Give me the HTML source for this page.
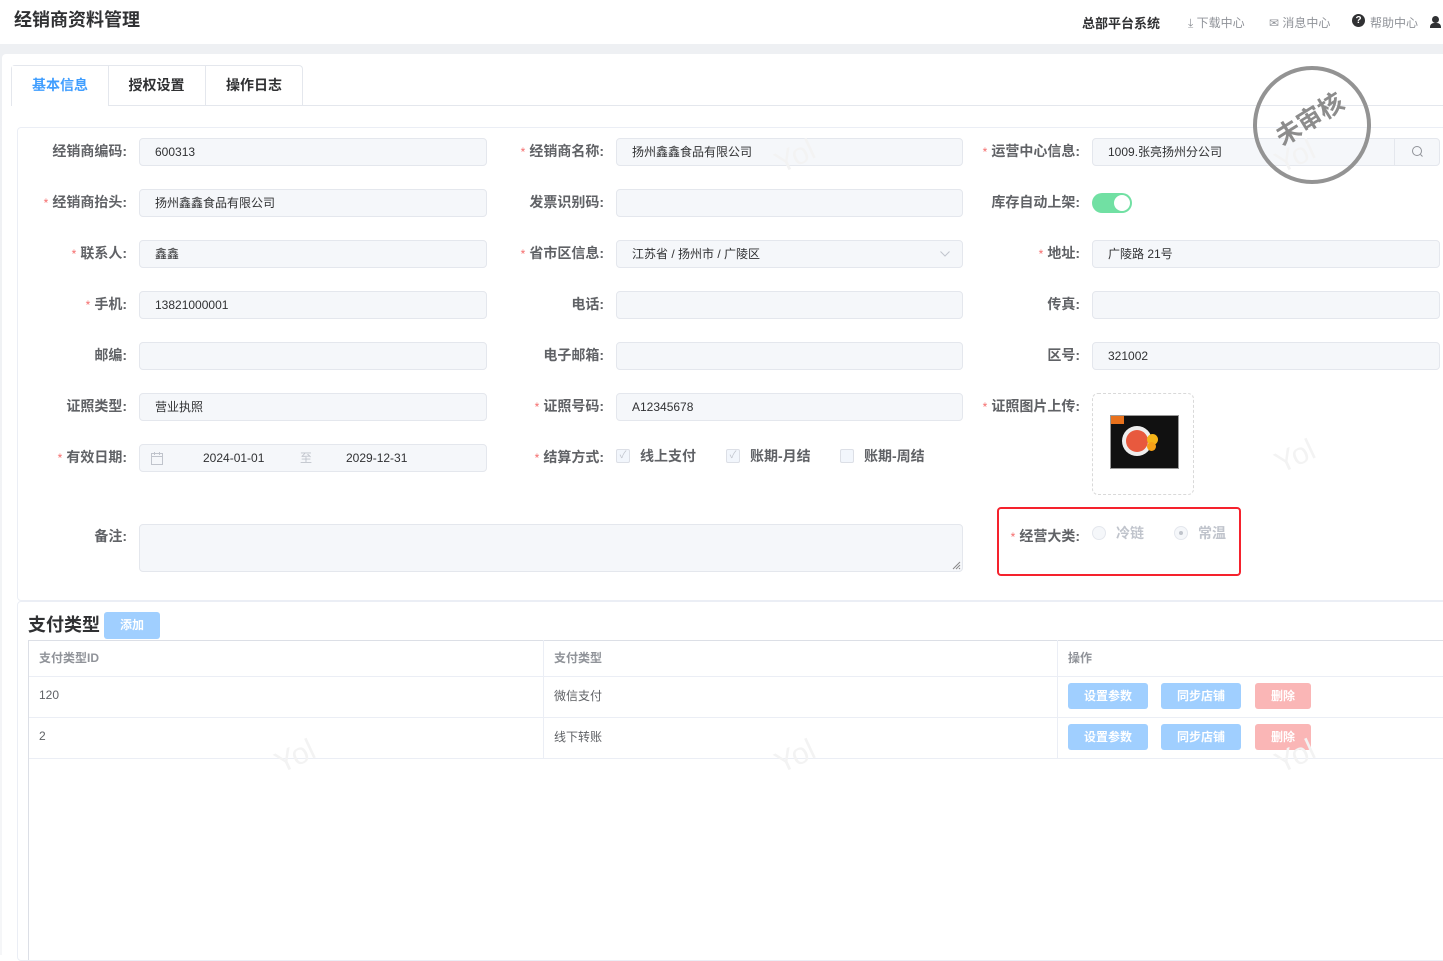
<!DOCTYPE html>
<html><head><meta charset="utf-8"><style>
*{box-sizing:border-box;margin:0;padding:0}
body{width:1443px;height:955px;overflow:hidden;background:#fff;font-family:"Liberation Sans","Noto Sans CJK SC",sans-serif;color:#606266;position:relative}
.a{position:absolute}
.lbl{position:absolute;font-size:14px;font-weight:bold;color:#606266;text-align:right;white-space:nowrap;line-height:16px}
.lbl i{color:#f56c6c;font-style:normal;font-weight:normal;margin-right:4px;font-size:12px}
.in{position:absolute;height:28px;background:#f5f7fa;border:1px solid #e4e7ed;border-radius:4px;font-size:12px;color:#303133;padding-left:15px;line-height:26px}
.wm{position:absolute;font-size:30px;color:#f3f3f3;transform:rotate(-25deg);font-family:"Liberation Sans",sans-serif}
.btn{position:absolute;height:26px;border-radius:3px;color:#fff;font-size:12px;font-weight:bold;text-align:center;line-height:26px}
.cb{position:absolute;top:449px;width:14px;height:14px;border:1px solid #dcdfe6;background:#f2f6fc;border-radius:2px;font-size:10px;color:#c0c4cc;text-align:center;line-height:12px}
.ct{position:absolute;top:448px;font-size:14px;font-weight:bold;color:#606266;line-height:16px}
</style></head><body>
<div class="wm" style="left:275px;top:140px">Yol</div>
<div class="a" style="left:14px;top:6px;font-size:18px;font-weight:bold;color:#303133">经销商资料管理</div>
<div class="a" style="left:1082px;top:13px;font-size:13px;font-weight:bold;color:#303133">总部平台系统</div>
<div class="a" style="left:1188px;top:14px;font-size:12px;color:#909399">⤓ 下载中心</div>
<div class="a" style="left:1269px;top:14px;font-size:12px;color:#909399">✉ 消息中心</div>
<div class="a" style="left:1352px;top:14px;width:13px;height:13px;border-radius:50%;background:#303133;color:#fff;font-size:10px;text-align:center;line-height:13px;font-weight:bold">?</div>
<div class="a" style="left:1370px;top:14px;font-size:12px;color:#909399">帮助中心</div>
<div class="a" style="left:1432px;top:16px;width:7px;height:7px;border-radius:50%;background:#303133"></div>
<div class="a" style="left:1430px;top:23px;width:11px;height:5px;border-radius:4px 4px 0 0;background:#303133"></div>
<div class="a" style="left:0;top:44px;width:1443px;height:911px;background:linear-gradient(#eef0f3,#f5f6f8)"></div>
<div class="a" style="left:2px;top:54px;width:1441px;height:901px;background:#fff;border-radius:4px 0 0 0"></div>
<!-- tabs -->
<div class="a" style="left:11px;top:105px;width:1432px;height:1px;background:#e4e7ed"></div>
<div class="a" style="left:11px;top:65px;width:292px;height:41px;border:1px solid #e4e7ed;border-bottom:none;border-radius:4px 4px 0 0"></div>
<div class="a" style="left:12px;top:66px;width:96px;height:40px;background:#fff;color:#409eff;font-size:14px;font-weight:bold;text-align:center;line-height:38px">基本信息</div>
<div class="a" style="left:108px;top:66px;width:1px;height:39px;background:#e4e7ed"></div>
<div class="a" style="left:108px;top:66px;width:97px;font-size:14px;font-weight:bold;color:#303133;text-align:center;line-height:38px">授权设置</div>
<div class="a" style="left:205px;top:66px;width:1px;height:39px;background:#e4e7ed"></div>
<div class="a" style="left:205px;top:66px;width:98px;font-size:14px;font-weight:bold;color:#303133;text-align:center;line-height:38px">操作日志</div>
<!-- form card -->
<div class="a" style="left:17px;top:127px;width:1440px;height:474px;border:1px solid #ebeef5;border-radius:4px"></div>

<div class="lbl" style="right:1316px;top:143px">经销商编码:</div><div class="in" style="left:139px;top:138px;width:348px">600313</div>
<div class="lbl" style="right:839px;top:143px"><i>*</i>经销商名称:</div><div class="in" style="left:616px;top:138px;width:347px">扬州鑫鑫食品有限公司</div>
<div class="lbl" style="right:363px;top:143px"><i>*</i>运营中心信息:</div><div class="in" style="left:1092px;top:138px;width:348px">1009.张亮扬州分公司</div>
<div class="a" style="left:1394px;top:139px;width:45px;height:26px;border-left:1px solid #e4e7ed"><svg width="45" height="26"><circle cx="22" cy="12" r="4.5" fill="none" stroke="#909399" stroke-width="1"/><line x1="25.5" y1="15.5" x2="27.5" y2="17.5" stroke="#909399"/></svg></div>

<div class="lbl" style="right:1316px;top:194px"><i>*</i>经销商抬头:</div><div class="in" style="left:139px;top:189px;width:348px">扬州鑫鑫食品有限公司</div>
<div class="lbl" style="right:839px;top:194px">发票识别码:</div><div class="in" style="left:616px;top:189px;width:347px"></div>
<div class="lbl" style="right:363px;top:194px">库存自动上架:</div>
<div class="a" style="left:1092px;top:193px;width:40px;height:20px;border-radius:10px;background:#71e0a3"></div>
<div class="a" style="left:1114px;top:195px;width:16px;height:16px;border-radius:50%;background:#fff"></div>

<div class="lbl" style="right:1316px;top:245px"><i>*</i>联系人:</div><div class="in" style="left:139px;top:240px;width:348px">鑫鑫</div>
<div class="lbl" style="right:839px;top:245px"><i>*</i>省市区信息:</div><div class="in" style="left:616px;top:240px;width:347px">江苏省 / 扬州市 / 广陵区<svg style="position:absolute;right:12px;top:10px" width="10" height="6"><path d="M0.5 0.5L5 5L9.5 0.5" fill="none" stroke="#c0c4cc"/></svg></div>
<div class="lbl" style="right:363px;top:245px"><i>*</i>地址:</div><div class="in" style="left:1092px;top:240px;width:348px">广陵路 21号</div>

<div class="lbl" style="right:1316px;top:296px"><i>*</i>手机:</div><div class="in" style="left:139px;top:291px;width:348px">13821000001</div>
<div class="lbl" style="right:839px;top:296px">电话:</div><div class="in" style="left:616px;top:291px;width:347px"></div>
<div class="lbl" style="right:363px;top:296px">传真:</div><div class="in" style="left:1092px;top:291px;width:348px"></div>

<div class="lbl" style="right:1316px;top:347px">邮编:</div><div class="in" style="left:139px;top:342px;width:348px"></div>
<div class="lbl" style="right:839px;top:347px">电子邮箱:</div><div class="in" style="left:616px;top:342px;width:347px"></div>
<div class="lbl" style="right:363px;top:347px">区号:</div><div class="in" style="left:1092px;top:342px;width:348px">321002</div>

<div class="lbl" style="right:1316px;top:398px">证照类型:</div><div class="in" style="left:139px;top:393px;width:348px">营业执照</div>
<div class="lbl" style="right:839px;top:398px"><i>*</i>证照号码:</div><div class="in" style="left:616px;top:393px;width:347px">A12345678</div>
<div class="lbl" style="right:363px;top:398px"><i>*</i>证照图片上传:</div>
<div class="a" style="left:1092px;top:393px;width:102px;height:102px;border:1px dashed #d9d9d9;border-radius:6px"></div>
<div class="a" style="left:1110px;top:415px;width:69px;height:54px;background:#111;border:1px solid #999">
 <div class="a" style="left:0;top:0;width:13px;height:8px;background:#e8711c"></div>
 <div class="a" style="left:11px;top:10px;width:30px;height:30px;border-radius:50%;background:#eee"></div>
 <div class="a" style="left:15px;top:14px;width:22px;height:22px;border-radius:50%;background:#e8593e"></div>
 <div class="a" style="left:36px;top:18px;width:11px;height:11px;border-radius:50%;background:#f6b418"></div>
 <div class="a" style="left:36px;top:26px;width:9px;height:9px;border-radius:50%;background:#f6a018"></div>
</div>

<div class="lbl" style="right:1316px;top:449px"><i>*</i>有效日期:</div>
<div class="in" style="left:139px;top:444px;width:348px;padding-left:12px;color:#c0c4cc"><svg style="position:absolute;left:11px;top:7px" width="12" height="13"><rect x="0.5" y="1.5" width="11" height="11" fill="none" stroke="#c0c4cc"/><line x1="0.5" y1="4.5" x2="11.5" y2="4.5" stroke="#c0c4cc"/><line x1="3.5" y1="0" x2="3.5" y2="3" stroke="#c0c4cc"/><line x1="8.5" y1="0" x2="8.5" y2="3" stroke="#c0c4cc"/></svg><span style="position:absolute;left:63px;color:#303133">2024-01-01</span><span style="position:absolute;left:160px">至</span><span style="position:absolute;left:206px;color:#303133">2029-12-31</span></div>
<div class="lbl" style="right:839px;top:449px"><i>*</i>结算方式:</div>
<div class="cb" style="left:616px">✓</div><div class="ct" style="left:640px">线上支付</div>
<div class="cb" style="left:726px">✓</div><div class="ct" style="left:750px">账期-月结</div>
<div class="cb" style="left:840px"></div><div class="ct" style="left:864px">账期-周结</div>

<div class="lbl" style="right:1316px;top:528px">备注:</div>
<div class="in" style="left:139px;top:524px;width:824px;height:48px"><svg style="position:absolute;right:1px;bottom:1px" width="10" height="10"><path d="M9 2L2 9M9 5L5 9M9 8L8 9" stroke="#888" stroke-width="1"/></svg></div>

<div class="a" style="left:997px;top:507px;width:244px;height:69px;border:2px solid #f5222d;border-radius:4px"></div>
<div class="lbl" style="right:363px;top:528px"><i>*</i>经营大类:</div>
<div class="a" style="left:1092px;top:526px;width:14px;height:14px;border-radius:50%;border:1px solid #e4e7ed;background:#f5f7fa"></div>
<div class="a" style="left:1116px;top:525px;font-size:14px;font-weight:bold;color:#c0c4cc;line-height:16px">冷链</div>
<div class="a" style="left:1174px;top:526px;width:14px;height:14px;border-radius:50%;border:1px solid #e4e7ed;background:#f5f7fa"></div>
<div class="a" style="left:1179px;top:531px;width:4px;height:4px;border-radius:50%;background:#c0c4cc"></div>
<div class="a" style="left:1198px;top:525px;font-size:14px;font-weight:bold;color:#c0c4cc;line-height:16px">常温</div>

<!-- stamp -->
<div class="a" style="left:1253px;top:66px;width:118px;height:118px;border-radius:50%;border:4px solid #939393"></div>
<div class="a" style="left:1262px;top:100px;width:94px;text-align:center;font-size:25px;font-weight:bold;color:#8c8c8c;transform:rotate(-32deg)">未审核</div>

<!-- payment -->
<div class="a" style="left:17px;top:601px;width:1440px;height:360px;border:1px solid #ebeef5;border-radius:4px"></div>
<div class="a" style="left:28px;top:611px;font-size:18px;font-weight:bold;color:#303133">支付类型</div>
<div class="btn" style="left:104px;top:612px;width:56px;height:27px;background:#a0cfff;line-height:27px">添加</div>
<div class="a" style="left:28px;top:640px;width:1420px;height:320px;border-left:1px solid #dcdfe6;border-top:1px solid #dcdfe6"></div>
<div class="a" style="left:543px;top:640px;width:1px;height:119px;background:#ebeef5"></div>
<div class="a" style="left:1057px;top:640px;width:1px;height:119px;background:#ebeef5"></div>
<div class="a" style="left:29px;top:676px;width:1414px;height:1px;background:#ebeef5"></div>
<div class="a" style="left:29px;top:717px;width:1414px;height:1px;background:#ebeef5"></div>
<div class="a" style="left:29px;top:758px;width:1414px;height:1px;background:#ebeef5"></div>
<div class="a" style="left:39px;top:649px;font-size:12px;font-weight:bold;color:#909399">支付类型ID</div>
<div class="a" style="left:554px;top:649px;font-size:12px;font-weight:bold;color:#909399">支付类型</div>
<div class="a" style="left:1068px;top:649px;font-size:12px;font-weight:bold;color:#909399">操作</div>
<div class="a" style="left:39px;top:688px;font-size:12px;color:#606266">120</div>
<div class="a" style="left:554px;top:687px;font-size:12px;color:#606266">微信支付</div>
<div class="a" style="left:39px;top:729px;font-size:12px;color:#606266">2</div>
<div class="a" style="left:554px;top:728px;font-size:12px;color:#606266">线下转账</div>
<div class="btn" style="left:1068px;top:683px;width:80px;background:#a0cfff">设置参数</div>
<div class="btn" style="left:1161px;top:683px;width:80px;background:#a0cfff">同步店铺</div>
<div class="btn" style="left:1255px;top:683px;width:56px;background:#fab6b6">删除</div>
<div class="btn" style="left:1068px;top:724px;width:80px;background:#a0cfff">设置参数</div>
<div class="btn" style="left:1161px;top:724px;width:80px;background:#a0cfff">同步店铺</div>
<div class="btn" style="left:1255px;top:724px;width:56px;background:#fab6b6">删除</div>

<div class="wm" style="left:775px;top:140px">Yol</div>
<div class="wm" style="left:1275px;top:140px">Yol</div>
<div class="wm" style="left:1275px;top:440px">Yol</div>
<div class="wm" style="left:275px;top:740px">Yol</div>
<div class="wm" style="left:775px;top:740px">Yol</div>
<div class="wm" style="left:1275px;top:740px">Yol</div>
</body></html>
